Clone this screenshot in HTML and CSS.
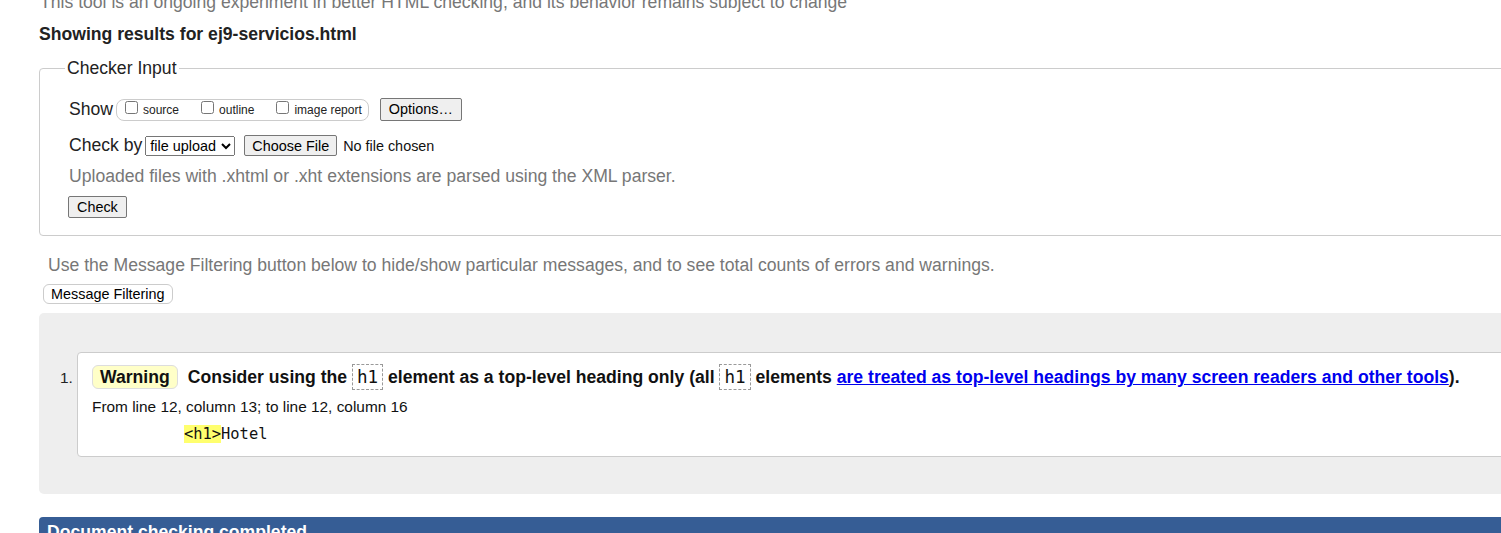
FILE: index.html
```html
<!DOCTYPE html>
<html lang="en">
<head>
<meta charset="utf-8">
<title>Nu Html Checker</title>
<link rel="stylesheet" href="styles.css">
</head>
<body>
<div class="page">
  <p class="intro">This tool is an ongoing experiment in better HTML checking, and its behavior remains subject to change</p>
  <p class="showing">Showing results for ej9-servicios.html</p>
  <fieldset class="checker">
    <legend>Checker Input</legend>
    <div class="row">
      <span class="lbl">Show</span>
      <span class="showopts">
        <label class="opt"><input type="checkbox">source</label>
        <label class="opt"><input type="checkbox">outline</label>
        <label class="opt"><input type="checkbox">image report</label>
      </span>
      <button class="btn options" type="button">Options…</button>
    </div>
    <div class="row">
      <span class="lbl">Check by</span>
      <select class="sel"><option>file upload</option></select>
      <span class="file"><button class="btn choose" type="button">Choose File</button><span class="nofile">No file chosen</span></span>
    </div>
    <p class="note">Uploaded files with .xhtml or .xht extensions are parsed using the XML parser.</p>
    <div class="row checkrow"><button class="btn check" type="button">Check</button></div>
  </fieldset>
  <p class="filter-note">Use the Message Filtering button below to hide/show particular messages, and to see total counts of errors and warnings.</p>
  <div class="filter-wrap"><button class="btn filter" type="button">Message Filtering</button></div>
  <div class="results">
    <ol class="msgs">
      <li class="msg">
        <p class="msgline"><strong class="badge">Warning</strong><span class="text">Consider using the <code class="tag">h1</code> element as a top-level heading only (all <code class="tag">h1</code> elements <a href="#">are treated as top-level headings by many screen readers and other tools</a>).</span></p>
        <p class="loc">From line 12, column 13; to line 12, column 16</p>
        <p class="extract"><code><b>&lt;h1&gt;</b>Hotel</code></p>
      </li>
    </ol>
  </div>
  <div class="completed">Document checking completed.</div>
</div>
</body>
</html>
```
FILE: styles.css
```css
html, body {
  margin: 0;
  padding: 0;
  overflow: hidden;
  background: #fff;
}
body {
  font-family: "Liberation Sans", Arial, sans-serif;
  color: #111;
}
.page {
  width: 1600px;
  padding-left: 39px;
  margin-top: -9px;
  display: flex;
  flex-direction: column;
  align-items: flex-start;
}
.intro {
  margin: 0 0 0 1px;
  font-size: 17.6px;
  line-height: 22px;
  color: #777;
}
.showing {
  margin: 11px 0 0 0;
  font-size: 17.6px;
  font-weight: bold;
  line-height: 20px;
  color: #222;
}
.checker {
  align-self: stretch;
  margin: 14px 0 0 0;
  padding: 19px 28px 17px 28px;
  border: 1px solid #ccc;
  border-radius: 4px;
  min-width: 0;
}
.checker legend {
  font-size: 17.6px;
  padding: 0 2px;
  margin-left: -3px;
  color: #222;
}
.row {
  display: flex;
  align-items: center;
  font-size: 17.6px;
  color: #222;
}
.row + .row { margin-top: 14px; }
.lbl { margin-left: 1px; margin-right: 3px; }
.showopts {
  display: inline-flex;
  align-items: center;
  height: 20px;
  padding: 0 6px 0 4px;
  border: 1px solid #ccc;
  border-radius: 8px;
  font-size: 12px;
  margin-right: 11px;
}
.opt {
  display: inline-flex;
  align-items: center;
  margin-right: 18px;
  color: #222;
}
.opt:last-child { margin-right: 0; }
.opt input {
  margin: 0 5px 0 4px;
  width: 13px;
  height: 13px;
  position: relative;
  top: -2px;
}
.btn {
  font-family: "Liberation Sans", Arial, sans-serif;
  font-size: 14.4px;
  color: #000;
  background: #efefef;
  border: 1px solid #767676;
  border-radius: 2px;
  padding: 1px 8px;
  height: 23px;
  line-height: 19px;
}
.sel {
  font-family: "Liberation Sans", Arial, sans-serif;
  font-size: 14.4px;
  height: 20px;
  width: 90px;
  margin-right: 9px;
  color: #000;
}
.file {
  display: inline-flex;
  align-items: center;
  font-size: 14.4px;
  color: #111;
}
.choose { height: 21px; padding: 0 7px; margin-right: 6px; line-height: 18px; }
.note {
  margin: 8px 0 0 1px;
  font-size: 17.6px;
  line-height: 24px;
  color: #777;
}
.checkrow { margin-top: 8px; }
.check { height: 22px; padding: 0 8px; }
.filter-note {
  margin: 18px 0 0 9px;
  font-size: 17.6px;
  line-height: 22px;
  color: #777;
}
.filter-wrap { margin-top: 8px; margin-left: 4px; }
.filter {
  background: #fff;
  border: 1px solid #ccc;
  border-radius: 6px;
  height: 20px;
  padding: 0 7px;
  line-height: 18px;
}
.results {
  align-self: stretch;
  margin-top: 9px;
  background: #eee;
  border-radius: 5px;
  padding: 39px 0 37px 0;
}
.msgs {
  margin: 0;
  padding: 0 0 0 38px;
  font-size: 15.4px;
}
.msg {
  background: #fff;
  border: 1px solid #ccc;
  border-radius: 4px;
  padding: 11px 14px 13px 14px;
}
.msg::marker { color: #222; }
.msgline {
  margin: 0;
  font-size: 17.6px;
  font-weight: bold;
  line-height: 26px;
  color: #111;
  white-space: nowrap;
}
.badge {
  display: inline-block;
  background: #ffffc8;
  border: 1px solid #ddd;
  border-radius: 6px;
  padding: 0 7px;
  line-height: 22px;
  margin-right: 10px;
}
.tag {
  display: inline-block;
  font-family: "DejaVu Sans Mono", monospace;
  font-weight: normal;
  font-size: 17.6px;
  line-height: 20px;
  border: 1px dashed #999;
  padding: 2px 4px;
}
.msgline a { color: #0000ee; }
.loc {
  margin: 8px 0 0 0;
  font-size: 15.4px;
  line-height: 18px;
  color: #111;
}
.extract {
  margin: 9px 0 0 92px;
  font-size: 15.4px;
  line-height: 18px;
}
.extract code {
  font-family: "DejaVu Sans Mono", monospace;
  font-size: 15.4px;
  color: #111;
}
.extract b {
  font-weight: normal;
  background: #ffff6e;
}
.completed {
  align-self: stretch;
  margin-top: 23px;
  background: #365d95;
  color: #fff;
  font-weight: bold;
  font-size: 17.6px;
  padding: 5px 8px 8px 8px;
  border-radius: 4px 0 0 0;
}
```
